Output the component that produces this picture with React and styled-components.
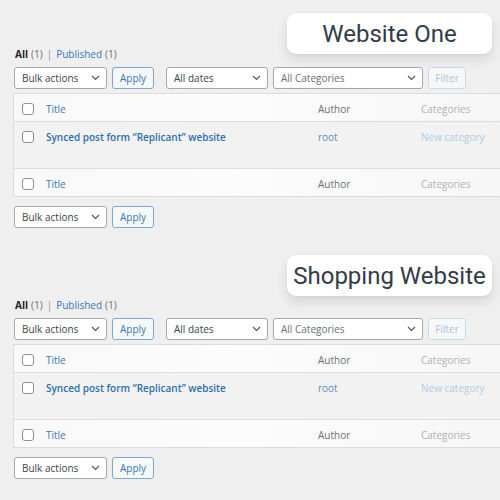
import React from "react";
import styled, { createGlobalStyle } from "styled-components";

const Global = createGlobalStyle`
  html, body { margin: 0; padding: 0; background: #efefef; overflow: hidden; }
  body { font-family: "Open Sans", "Noto Sans", sans-serif; font-size: 10px; color: #3c434a; }
`;

const Page = styled.div`
  width: 500px;
  height: 500px;
  overflow: hidden;
  position: relative;
`;

const Section = styled.section`
  position: relative;
  height: 251px;
  padding: 47px 0 0 14px;
  box-sizing: border-box;
`;

const Label = styled.div`
  position: absolute;
  right: 8px;
  top: ${(p) => p.$top}px;
  width: 205px;
  height: 41px;
  background: #ffffff;
  border-radius: 9px;
  box-shadow: 0 6px 12px rgba(0, 0, 0, 0.10), 0 1px 3px rgba(0, 0, 0, 0.04);
  display: flex;
  align-items: center;
  justify-content: center;
  font-family: Roboto, "Noto Sans", sans-serif;
  font-size: 24px;
  color: #333c46;
  z-index: 2;
`;

const SubNav = styled.div`
  height: 14px;
  line-height: 14px;
  display: flex;
  align-items: center;
  gap: 3px;
  color: #6a7077;
  padding-left: 1px;
`;

const Current = styled.span`
  color: #1d2327;
  font-weight: 700;
`;

const NavLink = styled.span`
  color: #3a77b5;
`;

const Sep = styled.span`
  color: #8c8f94;
  margin: 0 1px;
`;

const Actions = styled.div`
  display: flex;
  align-items: center;
  height: 22px;
  margin-top: ${(p) => p.$mt}px;
`;

const Select = styled.div`
  box-sizing: border-box;
  width: ${(p) => p.$w}px;
  height: 22px;
  margin-left: ${(p) => p.$ml || 0}px;
  border: 1px solid #a3a6aa;
  border-radius: 3px;
  background: #fff;
  display: flex;
  align-items: center;
  justify-content: space-between;
  padding: 0 6px 0 7px;
  color: ${(p) => (p.$muted ? "#6a7077" : "#3c434a")};
  font-size: 10px;
`;

const Chevron = () => (
  <svg width="9" height="6" viewBox="0 0 9 6" fill="none">
    <path d="M1 1l3.5 3.5L8 1" stroke="#50575e" strokeWidth="1.2" />
  </svg>
);

const Button = styled.div`
  box-sizing: border-box;
  height: 22px;
  width: ${(p) => p.$w}px;
  margin-left: ${(p) => p.$ml}px;
  border: 1px solid ${(p) => (p.$disabled ? "#c9dbee" : "#7ea6cf")};
  border-radius: 3px;
  background: #f6f7f7;
  color: ${(p) => (p.$disabled ? "#a9c3de" : "#3a77b5")};
  display: flex;
  align-items: center;
  justify-content: center;
  font-size: 10px;
`;

const Table = styled.div`
  margin-top: 4px;
  margin-left: -1px;
  width: 560px;
  border: 1px solid #dcdcde;
  background: #fafafa;
  box-sizing: border-box;
`;

const Row = styled.div`
  display: grid;
  grid-template-columns: 32px 272px 103px 1fr;
  height: ${(p) => p.$h}px;
  box-sizing: border-box;
  background: ${(p) => (p.$alt ? "#f2f2f2" : "linear-gradient(90deg, #f8f8f8 0%, #fcfcfc 40%, #f5f5f5 100%)")};
  border-top: ${(p) => (p.$bt ? "1px solid #dedede" : "none")};
  border-bottom: ${(p) => (p.$bb ? "1px solid #dedede" : "none")};
  padding-top: ${(p) => p.$pt}px;
`;

const Cell = styled.div`
  line-height: 14px;
  color: ${(p) => p.$c || "#50575e"};
  font-weight: ${(p) => p.$w || 400};
  white-space: nowrap;
`;

const CheckCell = styled.div`
  padding-left: 8px;
  padding-top: 1px;
`;

const Box = styled.div`
  width: 12px;
  height: 12px;
  box-sizing: border-box;
  border: 1px solid #8c8f94;
  border-radius: 3px;
  background: #fff;
`;

function WpList({ label, labelTop }) {
  return (
    <Section>
      <Label $top={labelTop}>{label}</Label>
      <SubNav>
        <Current>All</Current>
        <span>(1)</span>
        <Sep>|</Sep>
        <NavLink>Published</NavLink>
        <span>(1)</span>
      </SubNav>
      <Actions $mt={6}>
        <Select $w={93}>
          <span>Bulk actions</span>
          <Chevron />
        </Select>
        <Button $w={42} $ml={5}>Apply</Button>
        <Select $w={102} $ml={12}>
          <span>All dates</span>
          <Chevron />
        </Select>
        <Select $w={150} $ml={5} $muted>
          <span>All Categories</span>
          <Chevron />
        </Select>
        <Button $w={38} $ml={5} $disabled>Filter</Button>
      </Actions>
      <Table>
        <Row $h={28} $pt={8} $bb>
          <CheckCell><Box /></CheckCell>
          <Cell $c="#3a77b5">Title</Cell>
          <Cell $c="#6b7178">Author</Cell>
          <Cell $c="#b0b2b4">Categories</Cell>
        </Row>
        <Row $h={46} $pt={8} $alt>
          <CheckCell><Box /></CheckCell>
          <Cell $c="#2f6eab" $w={600}>Synced post form “Replicant” website</Cell>
          <Cell $c="#5f8fc0">root</Cell>
          <Cell $c="#b3cbe3">New category</Cell>
        </Row>
        <Row $h={28} $pt={8} $bt>
          <CheckCell><Box /></CheckCell>
          <Cell $c="#3a77b5">Title</Cell>
          <Cell $c="#6b7178">Author</Cell>
          <Cell $c="#b0b2b4">Categories</Cell>
        </Row>
      </Table>
      <Actions $mt={9}>
        <Select $w={93}>
          <span>Bulk actions</span>
          <Chevron />
        </Select>
        <Button $w={42} $ml={5}>Apply</Button>
      </Actions>
    </Section>
  );
}

export default function App() {
  return (
    <Page>
      <Global />
      <WpList label="Website One" labelTop={13} />
      <WpList label="Shopping Website" labelTop={4} />
    </Page>
  );
}
